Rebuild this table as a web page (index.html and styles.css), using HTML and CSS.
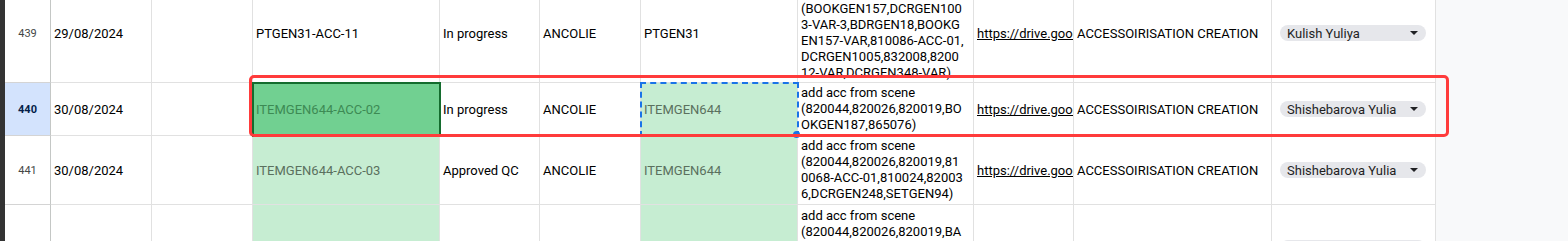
FILE: index.html
```html
<!DOCTYPE html>
<html lang="fr">
<head>
<meta charset="utf-8">
<title>Sheet</title>
<link rel="stylesheet" href="styles.css">
</head>
<body>
  <div class="strip"></div>
  <div class="sheet">
    <!-- row 439 -->
    <div class="rh">439</div>
    <div class="c">29/08/2024</div>
    <div class="c"></div>
    <div class="c">PTGEN31-ACC-11</div>
    <div class="c">In progress</div>
    <div class="c">ANCOLIE</div>
    <div class="c">PTGEN31</div>
    <div class="c wrap"><div class="lines">add acc from scene<br>(BOOKGEN157,DCRGEN100<br>3-VAR-3,BDRGEN18,BOOKG<br>EN157-VAR,810086-ACC-01,<br>DCRGEN1005,832008,8200<br>12-VAR,DCRGEN348-VAR)</div></div>
    <div class="c clip"><span class="link">https://drive.google.com/drive/folders/1aB</span></div>
    <div class="c">ACCESSOIRISATION CREATION</div>
    <div class="c chipcell"><div class="chip"><span>Kulish Yuliya</span><i class="tri"></i></div></div>

    <!-- row 440 -->
    <div class="rh sel">440</div>
    <div class="c">30/08/2024</div>
    <div class="c"></div>
    <div class="c gs">ITEMGEN644-ACC-02</div>
    <div class="c">In progress</div>
    <div class="c">ANCOLIE</div>
    <div class="c g copy">ITEMGEN644<span class="handle"></span></div>
    <div class="c wrap"><div class="lines">add acc from scene<br>(820044,820026,820019,BO<br>OKGEN187,865076)</div></div>
    <div class="c clip"><span class="link">https://drive.google.com/drive/folders/1cD</span></div>
    <div class="c">ACCESSOIRISATION CREATION</div>
    <div class="c chipcell"><div class="chip"><span>Shishebarova Yulia</span><i class="tri"></i></div></div>

    <!-- row 441 -->
    <div class="rh">441</div>
    <div class="c">30/08/2024</div>
    <div class="c"></div>
    <div class="c g">ITEMGEN644-ACC-03</div>
    <div class="c">Approved QC</div>
    <div class="c">ANCOLIE</div>
    <div class="c g">ITEMGEN644</div>
    <div class="c wrap"><div class="lines">add acc from scene<br>(820044,820026,820019,81<br>0068-ACC-01,810024,82003<br>6,DCRGEN248,SETGEN94)</div></div>
    <div class="c clip"><span class="link">https://drive.google.com/drive/folders/1eF</span></div>
    <div class="c">ACCESSOIRISATION CREATION</div>
    <div class="c chipcell"><div class="chip"><span>Shishebarova Yulia</span><i class="tri"></i></div></div>

    <!-- row 442 -->
    <div class="rh">442</div>
    <div class="c"></div>
    <div class="c"></div>
    <div class="c g"></div>
    <div class="c"></div>
    <div class="c"></div>
    <div class="c g"></div>
    <div class="c wrap"><div class="lines">add acc from scene<br>(820044,820026,820019,BA<br>LLGEN12,810024,820036,DC<br>RGEN248,SETGEN94,81006<br>8-ACC-02)</div></div>
    <div class="c"></div>
    <div class="c"></div>
    <div class="c chipcell"><div class="chip"><span>Shishebarova Yulia</span><i class="tri"></i></div></div>
  </div>
  <div class="mark"></div>
</body>
</html>
```

FILE: styles.css
```css
html, body {
  margin: 0;
  padding: 0;
}
body {
  position: relative;
  width: 1568px;
  height: 241px;
  overflow: hidden;
  background: #f8f9fa;
  display: flex;
  align-items: flex-start;
  font-family: Roboto, "Liberation Sans", Arial, sans-serif;
  font-size: 13px;
  color: #000;
}
.strip {
  flex: none;
  width: 5px;
  height: 241px;
  background: #333333;
}
.sheet {
  flex: none;
  margin-top: -16px;
  display: grid;
  grid-template-columns: 46px 101px 101px 187px 100px 101px 157px 176px 100px 198px 164px;
  grid-template-rows: 99px 53px 69px 86px;
  background: #fff;
}
.c, .rh {
  box-sizing: border-box;
  border-right: 1px solid #e1e1e1;
  border-bottom: 1px solid #e1e1e1;
  display: flex;
  align-items: center;
  padding: 0 3px;
  white-space: nowrap;
  min-width: 0;
  background: #fff;
}
.rh {
  justify-content: center;
  font-size: 11px;
  color: #444746;
  border-right-color: #c4c7c5;
  border-bottom-color: #d4d4d4;
  padding: 0;
}
.rh.sel {
  background: #d3e3fd;
  color: #041e49;
  font-weight: 700;
}
.wrap {
  overflow: hidden;
}
.lines {
  line-height: 16px;
  white-space: nowrap;
}
.clip {
  overflow: hidden;
  padding-right: 0;
}
.link {
  display: block;
  width: 100%;
  overflow: hidden;
  text-decoration: underline;
}
.g {
  background: #c6edd2;
  color: #5a705e;
}
.gs {
  background: #71d091;
  color: #3d8a54;
  outline: 2px solid #146c2e;
  outline-offset: -1px;
  position: relative;
  z-index: 2;
}
.copy {
  position: relative;
  outline: 2px dashed #1a73e8;
  outline-offset: -1px;
  z-index: 2;
}
.handle {
  position: absolute;
  right: -3px;
  bottom: -3px;
  width: 7px;
  height: 7px;
  border-radius: 50%;
  background: #1a73e8;
  z-index: 3;
}
.chipcell {
  padding: 0 0 0 8px;
}
.chip {
  box-sizing: border-box;
  width: 146px;
  height: 16px;
  border-radius: 8px;
  background: #e6e7eb;
  display: flex;
  align-items: center;
  justify-content: space-between;
  padding: 0 8px 0 7px;
  color: #1f1f1f;
  font-size: 13px;
}
.tri {
  width: 0;
  height: 0;
  border-left: 4px solid transparent;
  border-right: 4px solid transparent;
  border-top: 4px solid #202124;
}
.mark {
  position: absolute;
  left: 249px;
  top: 75px;
  width: 1200px;
  height: 62px;
  box-sizing: border-box;
  border: 3px solid #ff3b3b;
  border-radius: 5px;
  z-index: 5;
  pointer-events: none;
}
```
